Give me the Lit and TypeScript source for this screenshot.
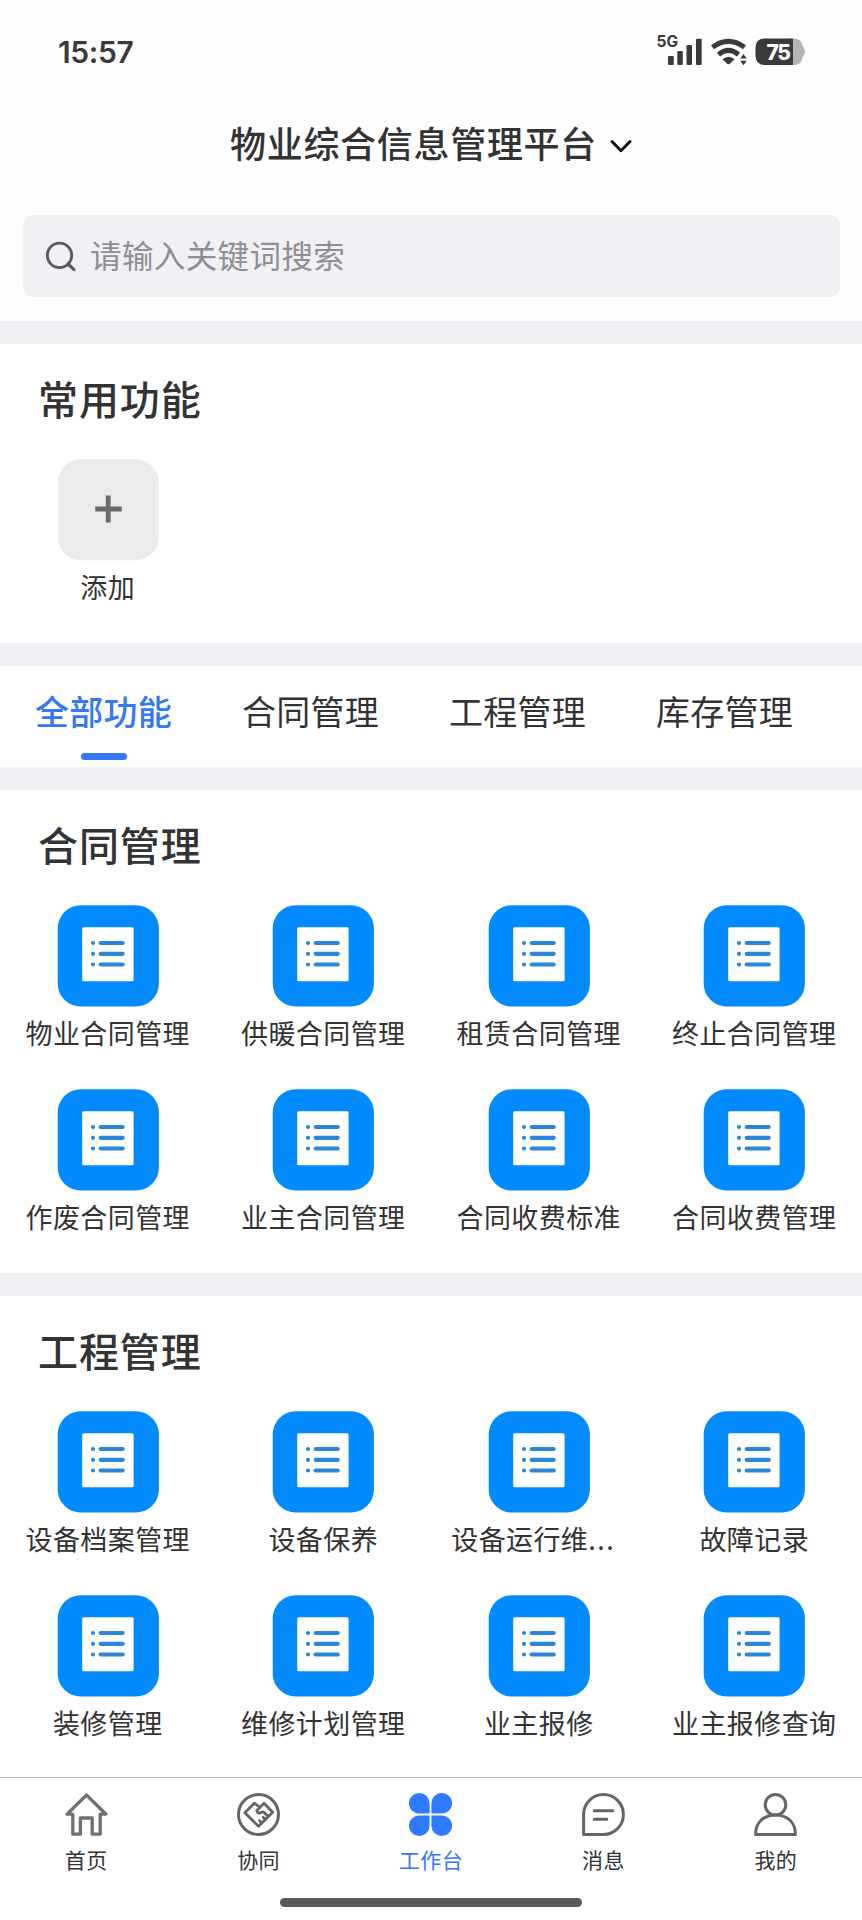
import { LitElement, html, css, svg } from "lit";
import { customElement, property } from "lit/decorators.js";
import { classMap } from "lit/directives/class-map.js";

const listIcon = html`<svg class="tile" viewBox="0 0 102 102">
  <rect x=".7" y=".2" width="101.200" height="101.400" rx="23" fill="#028bff" />
  <rect x="25.200" y="22.300" width="51.400" height="54" rx="1.500" fill="#fff" />
  ${[38, 48.8, 59.5].map(
    (y) => svg`<circle cx="36" cy=${y} r="2.100" fill="#2f86d8"/><path d="M43.700 ${y}h22" stroke="#2a86da" stroke-width="4.200" stroke-linecap="round"/>`
  )}
</svg>`;

const addIcon = html`<svg class="tile" viewBox="0 0 102 102">
  <rect x=".7" y=".2" width="101.200" height="101" rx="23" fill="#ebebeb" />
  <path d="M51.200 36.500V63.500M38.200 50h26.500" stroke="#6b6b6b" stroke-width="4.800" fill="none" />
</svg>`;

@customElement("function-item")
class FunctionItem extends LitElement {
  @property() label = "";
  @property({ type: Boolean }) add = false;
  static styles = css`
    :host { display: flex; flex-direction: column; align-items: center; height: 184px; min-width: 0; }
    .tile { display: block; width: 102px; height: 102px; flex: none; }
    .label { margin-top: 7px; font-size: 27px; line-height: 38px; letter-spacing: 0.4px; color: #333; white-space: nowrap; }
    .dots { letter-spacing: 1.5px; padding-right: 11px; }
  `;
  render() {
    const cut = this.label.endsWith("...");
    const text = cut ? this.label.slice(0, -3) : this.label;
    return html`${this.add ? addIcon : listIcon}<span class="label">${text}${cut ? html`<span class="dots">...</span>` : ""}</span>`;
  }
}

@customElement("function-section")
class FunctionSection extends LitElement {
  @property() heading = "";
  @property({ type: Array }) items: string[] = [];
  @property({ type: Boolean }) addable = false;
  static styles = css`
    :host { display: block; background: #fff; }
    .heading { margin: 0; padding: 25px 38px 0; height: 90px; box-sizing: border-box; height: 115px; font-size: 40px; line-height: 58px; font-weight: 500; letter-spacing: 0.9px; color: #333; }
    .grid { display: grid; grid-template-columns: repeat(4, 1fr); }
  `;
  render() {
    return html`<h2 class="heading">${this.heading}</h2>
      <div class="grid">
        ${this.addable ? html`<function-item label="添加" add></function-item>` : ""}
        ${this.items.map((t) => html`<function-item .label=${t}></function-item>`)}
      </div>`;
  }
}

const navIcons = {
  home: svg`<path d="M21.500 2 41 21.200h-5.800V41.200H27.200V25H15.400v16.200H7.800V21.200H2Z" stroke="#727272" stroke-width="3.300" stroke-linejoin="round"/>`,
  team: svg`<circle cx="21.500" cy="21.500" r="20"/><g stroke-width="2.800" stroke-linejoin="round" stroke-linecap="round"><path d="M21 12.800 17.300 10.200 7.800 19.800 21.500 33.300 35.700 19.200 27 10.300 19.800 17.500Q20.500 20.800 23.500 19.800 26 18 27.300 19.800L31 23.300"/><path d="M28.300 26.300 26.200 24.200M24.700 29.900 22.600 27.800"/></g>`,
  work: svg`<g fill="#2f7bff" stroke="none"><path d="M10.200 0A10.200 10.200 0 0 1 20.600 10.200V20.600H10.200A10.300 10.300 0 0 1 10.200 0Z"/><path d="M32.800 0A10.200 10.200 0 0 0 22.400 10.200V20.600H32.800A10.300 10.300 0 0 0 32.800 0Z"/><path d="M10.200 43A10.200 10.200 0 0 0 20.600 32.800V22.400H10.200A10.300 10.300 0 0 0 10.200 43Z"/><path d="M32.800 43A10.200 10.200 0 0 1 22.400 32.800V22.400H32.800A10.300 10.300 0 0 1 32.800 43Z"/></g>`,
  message: svg`<path d="M1.600 41.400V21.500A19.900 19.900 0 1 1 21.500 41.400Z" stroke-linejoin="round"/><path d="M12.200 17.800h18.600M12.200 26.300h12.600" stroke-linecap="round"/>`,
  me: svg`<circle cx="21.500" cy="11.800" r="10.300"/><path d="M1.600 41.400C1.600 29 10 21.900 21.500 21.900S41.400 29 41.400 41.400Z" stroke-linejoin="round"/>`,
};

@customElement("app-root")
class AppRoot extends LitElement {
  static styles = css`
    :host { display: flex; flex-direction: column; height: 1920px; width: 862px; overflow: hidden; background: #fefefe; color: #333; font-family: "Noto Sans CJK SC", "Noto Sans", sans-serif; }
    svg { display: block; fill: none; }
    .status { height: 104px; display: flex; justify-content: space-between; box-sizing: border-box; padding: 32px 56px 0 58px; flex: none; }
    .time { font: 600 30px/40px Inter, sans-serif; letter-spacing: -0.4px; color: #3a3a3a; }
    .title { height: 111px; display: flex; justify-content: center; align-items: flex-start; gap: 13px; flex: none; }
    .title h1 { margin: 12px 0 0; font-size: 36px; line-height: 52px; font-weight: 500; letter-spacing: 0.7px; }
    .title svg { margin-top: 35px; }
    .search { margin: 0 22px 24px 23px; height: 82px; border-radius: 11px; background: #f0f0f5; display: flex; align-items: center; gap: 13px; padding-left: 22px; font-size: 31.5px; letter-spacing: 0.4px; color: #8f8f93; flex: none; }
    .search svg { margin-top: 2px; }
    .search span { padding-bottom: 4px; }
    .band { height: 23px; background: #f0f0f5; flex: none; }
    .common { height: 299px; flex: none; }
    .contract { height: 483px; flex: none; }
    .project { flex: 1; min-height: 0; overflow: hidden; }
    .tabs { height: 101px; display: flex; flex: none; background: #fff; }
    .tab { width: 207px; display: flex; flex-direction: column; align-items: center; font-size: 34px; line-height: 48px; letter-spacing: 0.3px; padding-top: 21px; gap: 18px; box-sizing: border-box; }
    .tab.on { color: #3478f6; font-weight: 500; }
    .tab.on::after { content: ""; width: 46px; height: 7px; border-radius: 4px; background: #3478f6; }
    .nav { height: 143px; box-sizing: border-box; border-top: 1px solid #bcbcbc; background: #fff; flex: none; display: flex; flex-direction: column; align-items: center; }
    .items { display: grid; grid-template-columns: repeat(5, 1fr); width: 100%; height: 120px; }
    .nav-item { display: flex; flex-direction: column; align-items: center; padding-top: 15px; gap: 7px; font-size: 21px; line-height: 32px; letter-spacing: 0.4px; }
    .nav-item.on { color: #3478f6; }
    .nav-item svg { width: 43px; height: 43px; stroke: #666; stroke-width: 3; }
    .handle { width: 302px; height: 9px; border-radius: 5px; background: #5a5a5a; }
  `;
  render() {
    const tabs = ["全部功能", "合同管理", "工程管理", "库存管理"];
    const nav: [keyof typeof navIcons, string][] = [["home", "首页"], ["team", "协同"], ["work", "工作台"], ["message", "消息"], ["me", "我的"]];
    return html`
      <header class="status">
        <span class="time">15:57</span>
        <svg width="150" height="38" viewBox="656 32 150 38">
          <text x="656.500" y="47.300" font-family="Inter" font-weight="700" font-size="15.500" fill="#3a3a3a">5G</text>
          <g fill="#3a3a3a"><rect x="668" y="56" width="5.800" height="9" rx="1.300"/><rect x="677.300" y="51" width="5.500" height="14" rx="1.300"/><rect x="686.500" y="45" width="5.500" height="20" rx="1.300"/><rect x="696" y="38.700" width="5.700" height="26.300" rx="1.300"/></g>
          <g stroke="#3a3a3a" stroke-width="5"><path d="M712.500 47.300Q728.500 35.500 744.500 47.300"/><path d="M718.500 54.600Q728.500 46.300 738.500 54.600"/></g>
          <path d="M722.500 59.300Q728.500 54.300 734.500 59.300L729.800 63.700Q728.500 64.700 727.200 63.700Z" fill="#3a3a3a"/>
          <path d="M740.200 58.500 743.500 54 746.800 58.500ZM740.200 60.800 743.500 65.300 746.800 60.800Z" fill="#3a3a3a"/>
          <path d="M793 38.500C799.500 38.500 802 41.500 802.500 46Q805 48 805 51.500T802.500 57C802 62 799.500 65 793 65H790V38.500Z" fill="#b5b5b5"/>
          <path d="M793 38.500V65H765Q755.500 65 755.500 55.500V48Q755.500 38.500 765 38.500Z" fill="#3a3a3a"/>
          <text x="766.500" y="60" font-family="Inter" font-weight="800" font-size="21" letter-spacing="-1.300" fill="#fff">75</text>
        </svg>
      </header>
      <div class="title"><h1>物业综合信息管理平台</h1>
        <svg width="22" height="15" viewBox="0 0 22 15"><path d="M2 2.500 11 11.800 20 2.500" stroke="#111" stroke-width="2.900" stroke-linecap="round" stroke-linejoin="round"/></svg>
      </div>
      <div class="search">
        <svg width="32" height="32" viewBox="0 0 32 32"><circle cx="14.500" cy="14.300" r="12.200" stroke="#5c5c60" stroke-width="2.900"/><path d="M23 23 29 28.600" stroke="#5c5c60" stroke-width="3.200" stroke-linecap="round"/></svg>
        <span>请输入关键词搜索</span>
      </div>
      <div class="band"></div>
      <function-section class="common" heading="常用功能" addable></function-section>
      <div class="band"></div>
      <nav class="tabs">${tabs.map((t, i) => html`<div class=${classMap({ tab: true, on: i === 0 })}>${t}</div>`)}</nav>
      <div class="band"></div>
      <function-section class="contract" heading="合同管理" .items=${["物业合同管理", "供暖合同管理", "租赁合同管理", "终止合同管理", "作废合同管理", "业主合同管理", "合同收费标准", "合同收费管理"]}></function-section>
      <div class="band"></div>
      <function-section class="project" heading="工程管理" .items=${["设备档案管理", "设备保养", "设备运行维...", "故障记录", "装修管理", "维修计划管理", "业主报修", "业主报修查询"]}></function-section>
      <footer class="nav">
        <div class="items">${nav.map(([k, t]) => html`<div class=${classMap({ "nav-item": true, on: k === "work" })}><svg viewBox="0 0 43 43">${navIcons[k]}</svg><span>${t}</span></div>`)}</div>
        <div class="handle"></div>
      </footer>`;
  }
}
